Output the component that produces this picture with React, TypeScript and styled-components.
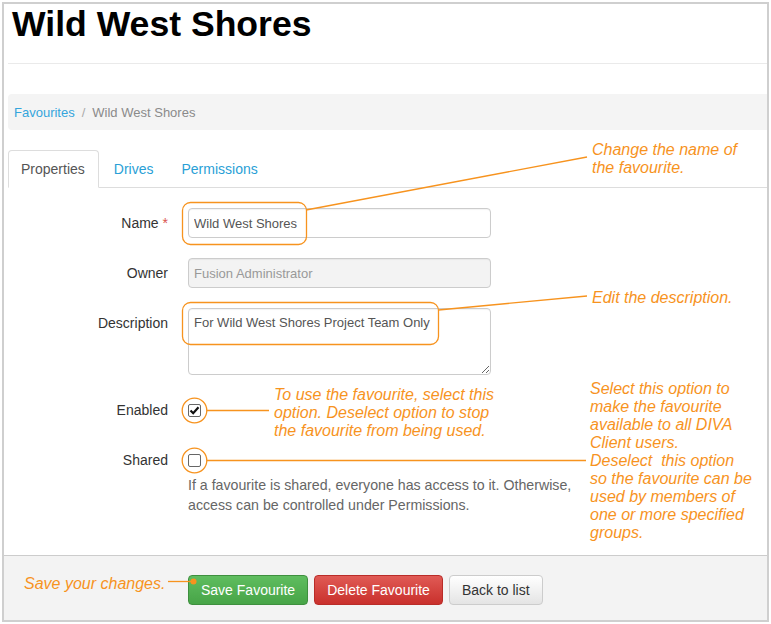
import React from "react";
import styled, { createGlobalStyle } from "styled-components";

const ORANGE = "#f7931e";

const Global = createGlobalStyle`
  html, body { margin: 0; padding: 0; background: #fff; }
  body { font-family: "Liberation Sans", Arial, sans-serif; font-size: 14px; color: #333; }
  * { box-sizing: border-box; }
`;

const Page = styled.div`
  position: relative;
  width: 771px;
  height: 624px;
  padding: 2px;
`;

const Frame = styled.div`
  width: 767px;
  height: 620px;
  border: 2px solid #cfcfcf;
  display: flex;
  flex-direction: column;
`;

const Main = styled.div`
  padding-left: 4px;
  display: flex;
  flex-direction: column;
`;

const Title = styled.h1`
  margin: 0 0 0 4px;
  font-size: 35.6px;
  line-height: 40px;
  font-weight: bold;
  color: #000;
`;

const Rule = styled.div`
  height: 1px;
  background: #eaeaea;
  margin-top: 19px;
`;

const Breadcrumb = styled.div`
  margin-top: 30px;
  height: 36px;
  background: #f4f4f4;
  border-radius: 4px 0 0 4px;
  padding: 0 6px;
  display: flex;
  align-items: center;
  font-size: 13px;
`;

const Crumb = styled.span<{ $link?: boolean }>`
  color: ${(p) => (p.$link ? "#35a5dc" : "#8a8a8a")};
`;

const Sep = styled.span`
  color: #aaa;
  padding: 0 7px;
`;

const Tabs = styled.div`
  margin-top: 20px;
  display: flex;
  border-bottom: 1px solid #ddd;
`;

const Tab = styled.div<{ $active?: boolean }>`
  padding: 8px ${(p) => (p.$active ? 13 : 12)}px 8px 12px;
  line-height: 20px;
  font-size: 14px;
  margin-right: 2px;
  margin-bottom: -1px;
  border: 1px solid transparent;
  border-radius: 4px 4px 0 0;
  color: ${(p) => (p.$active ? "#555" : "#2a9fd6")};
  background: ${(p) => (p.$active ? "#fff" : "transparent")};
  border-color: ${(p) => (p.$active ? "#ddd #ddd transparent" : "transparent")};
`;

const Form = styled.div`
  padding-top: 20px;
`;

const Row = styled.div<{ $gap?: number }>`
  display: grid;
  grid-template-columns: 160px 1fr;
  column-gap: 20px;
  margin-bottom: ${(p) => (p.$gap ?? 20)}px;
`;

const Label = styled.div`
  text-align: right;
  font-size: 14px;
  line-height: 20px;
  padding-top: 5px;
  color: #333;
`;

const Req = styled.span`
  color: #d9534f;
`;

const TextInput = styled.input`
  display: block;
  width: 303px;
  height: 30px;
  border: 1px solid #ccc;
  border-radius: 4px;
  padding: 0 5px;
  font-family: "Liberation Sans", Arial, sans-serif;
  font-size: 13px;
  color: #555;
  background: #fff;
  box-shadow: inset 0 1px 1px rgba(0, 0, 0, 0.05);
  outline: none;
  &:disabled {
    background: #f3f3f3;
    color: #999;
  }
`;

const TextArea = styled.textarea`
  display: block;
  width: 303px;
  height: 67px;
  border: 1px solid #ccc;
  border-radius: 4px;
  padding: 5px;
  font-family: "Liberation Sans", Arial, sans-serif;
  font-size: 13px;
  line-height: 18px;
  color: #555;
  box-shadow: inset 0 1px 1px rgba(0, 0, 0, 0.05);
  outline: none;
`;

const CheckLine = styled.div`
  height: 30px;
  display: flex;
  align-items: center;
`;

const Box = styled.span`
  width: 13px;
  height: 13px;
  border: 1px solid #666;
  border-radius: 2px;
  background: #fff;
  display: flex;
  align-items: center;
  justify-content: center;
`;

const Help = styled.div`
  width: 395px;
  font-size: 14.2px;
  line-height: 20px;
  color: #666;
`;

const Footer = styled.div`
  margin-top: auto;
  height: 65px;
  border-top: 1px solid #cccccc;
  background: #f3f3f3;
  padding: 19px 0 0 184px;
  display: flex;
  align-items: flex-start;
  gap: 6px;
`;

const Button = styled.button<{ $kind: "save" | "delete" | "plain" }>`
  height: 30px;
  padding: 0 12px;
  border-radius: 4px;
  font-family: "Liberation Sans", Arial, sans-serif;
  font-size: 14px;
  line-height: 28px;
  cursor: pointer;
  color: ${(p) => (p.$kind === "plain" ? "#333" : "#fff")};
  border: 1px solid
    ${(p) => (p.$kind === "save" ? "#3e8f3e" : p.$kind === "delete" ? "#b92c28" : "#ccc")};
  background: ${(p) =>
    p.$kind === "save"
      ? "linear-gradient(#5fbd5f, #47a447)"
      : p.$kind === "delete"
      ? "linear-gradient(#e05a55, #c9302c)"
      : "linear-gradient(#ffffff, #e4e4e4)"};
`;

const Overlay = styled.svg`
  position: absolute;
  left: 0;
  top: 0;
  pointer-events: none;
`;

const Note = styled.div<{ $x: number; $y: number }>`
  position: absolute;
  left: ${(p) => p.$x}px;
  top: ${(p) => p.$y}px;
  font-family: "Liberation Sans", Arial, sans-serif;
  font-style: italic;
  font-size: 16px;
  line-height: 18px;
  color: ${ORANGE};
  white-space: pre;
  pointer-events: none;
`;

const Check = () => (
  <svg width="11" height="11" viewBox="0 0 11 11">
    <path d="M1.5 5.5 L4.2 8.2 L9.5 2.2" fill="none" stroke="#111" strokeWidth="2.2" />
  </svg>
);

export default function App() {
  return (
    <Page>
      <Global />
      <Frame>
        <Main>
          <Title>Wild West Shores</Title>
          <Rule />
          <Breadcrumb>
            <Crumb $link>Favourites</Crumb>
            <Sep>/</Sep>
            <Crumb>Wild West Shores</Crumb>
          </Breadcrumb>
          <Tabs>
            <Tab $active>Properties</Tab>
            <Tab>Drives</Tab>
            <Tab>Permissions</Tab>
          </Tabs>
          <Form>
            <Row>
              <Label>
                Name <Req>*</Req>
              </Label>
              <TextInput value="Wild West Shores" readOnly />
            </Row>
            <Row>
              <Label>Owner</Label>
              <TextInput value="Fusion Administrator" disabled />
            </Row>
            <Row>
              <Label>Description</Label>
              <TextArea value="For Wild West Shores Project Team Only" readOnly />
            </Row>
            <Row>
              <Label>Enabled</Label>
              <CheckLine>
                <Box>
                  <Check />
                </Box>
              </CheckLine>
            </Row>
            <Row $gap={0}>
              <Label>Shared</Label>
              <div>
                <CheckLine>
                  <Box />
                </CheckLine>
                <Help>
                  If a favourite is shared, everyone has access to it. Otherwise, access can be
                  controlled under Permissions.
                </Help>
              </div>
            </Row>
          </Form>
        </Main>
        <Footer>
          <Button $kind="save">Save Favourite</Button>
          <Button $kind="delete">Delete Favourite</Button>
          <Button $kind="plain">Back to list</Button>
        </Footer>
      </Frame>

      <Overlay width="771" height="624" viewBox="0 0 771 624">
        <g fill="none" stroke={ORANGE} strokeWidth="1.3">
          <rect x="182.5" y="202.5" width="124" height="42" rx="8" />
          <line x1="306" y1="210" x2="587" y2="157" />
          <rect x="182.5" y="302.5" width="256" height="42" rx="8" />
          <line x1="438.5" y1="310" x2="587" y2="296" />
          <circle cx="194.5" cy="410.5" r="12.3" />
          <line x1="206.8" y1="410.5" x2="269" y2="410.5" />
          <circle cx="194.5" cy="460.5" r="12.3" />
          <line x1="206.8" y1="460.5" x2="586" y2="460.5" />
          <line x1="168" y1="581.5" x2="193" y2="581.5" />
        </g>
        <circle cx="193.5" cy="581.5" r="3" fill={ORANGE} />
      </Overlay>

      <Note $x={592} $y={141}>{"Change the name of\nthe favourite."}</Note>
      <Note $x={592} $y={288.5}>Edit the description.</Note>
      <Note $x={274} $y={386}>
        {"To use the favourite, select this\noption. Deselect option to stop\nthe favourite from being used."}
      </Note>
      <Note $x={590} $y={379.5}>
        {
          "Select this option to\nmake the favourite\navailable to all DIVA\nClient users.\nDeselect  this option\nso the favourite can be\nused by members of\none or more specified\ngroups."
        }
      </Note>
      <Note $x={24} $y={575}>Save your changes.</Note>
    </Page>
  );
}
